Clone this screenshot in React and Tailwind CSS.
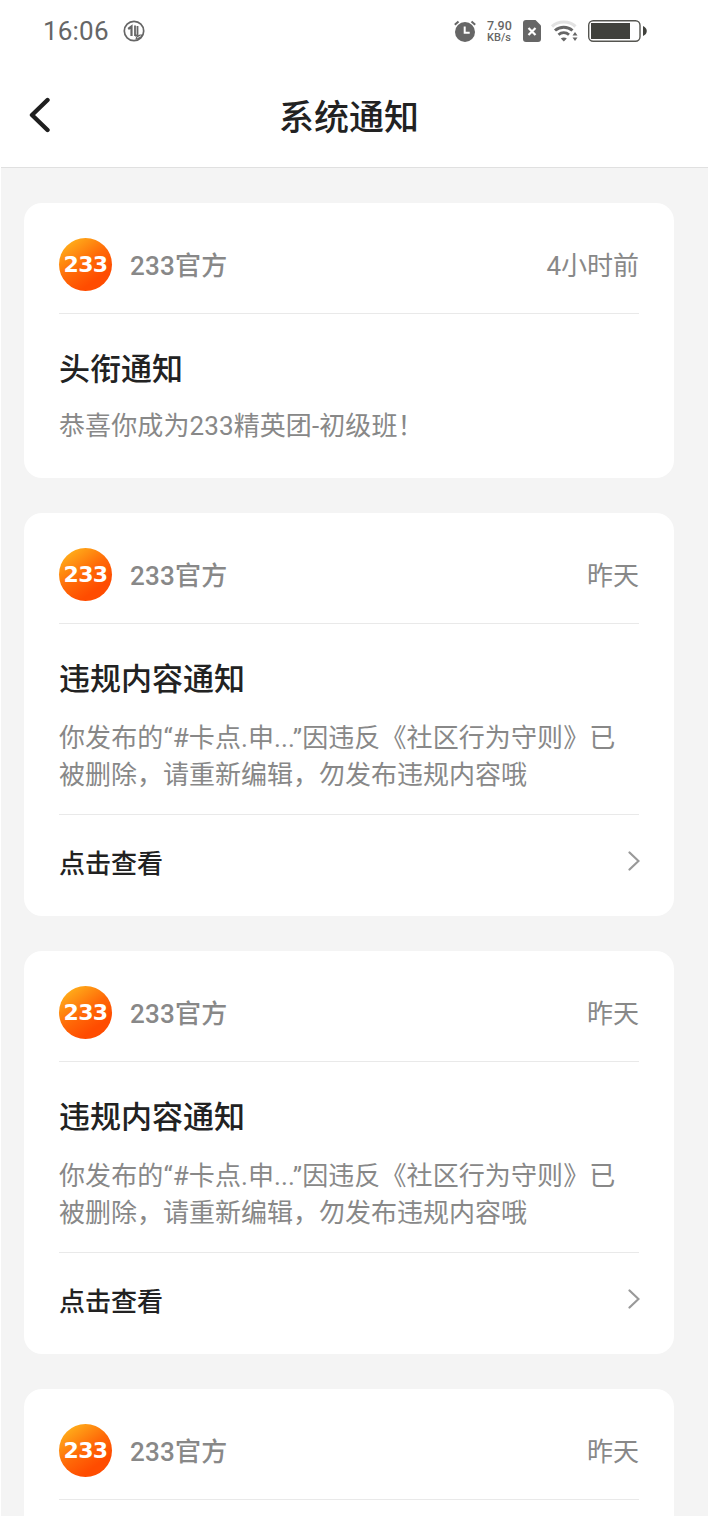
import React from "react";

const messages = [
  {
    id: 1,
    time: "4小时前",
    title: "头衔通知",
    lines: ["恭喜你成为233精英团-初级班！"],
    link: false,
  },
  {
    id: 2,
    time: "昨天",
    title: "违规内容通知",
    lines: ["你发布的“#卡点.申...”因违反《社区行为守则》已", "被删除，请重新编辑，勿发布违规内容哦"],
    link: true,
  },
  {
    id: 3,
    time: "昨天",
    title: "违规内容通知",
    lines: ["你发布的“#卡点.申...”因违反《社区行为守则》已", "被删除，请重新编辑，勿发布违规内容哦"],
    link: true,
  },
  {
    id: 4,
    time: "昨天",
  },
];

function StatusBar() {
  return (
    <div className="flex h-[62px] items-center pl-[43px] pr-[60px] text-[#666]">
      <span className="text-[26px] leading-[30px] tracking-[0.2px]">16:06</span>

      {/* Data saver */}
      <svg className="ml-[14px]" width="22" height="22" viewBox="0 0 22 22" fill="none" stroke="currentColor">
        <circle cx="11" cy="11" r="9.7" strokeWidth="1.7" />
        <path d="M5.2 9 8.500 6.500V16" strokeWidth="2.200" />
        <path d="M12 5.500V16M14.500 6v9l-2.500 1" strokeWidth="1.800" />
        <path d="M12.500 19.500c0-3.500 3-5.500 7.500-5-1 3.500-3.500 5.500-7.500 5Z" fill="currentColor" stroke="none" />
        <path d="m14 18 4-2.300" stroke="white" strokeWidth=".8" />
      </svg>

      <div className="ml-auto flex items-center">
        {/* Alarm */}
        <svg width="22" height="22" viewBox="0 0 22 22" fill="none">
          <circle cx="11" cy="12" r="10" fill="#666" />
          <path d="m.8 4.800 3.700-3.300M21.200 4.800l-3.700-3.300" stroke="#666" strokeWidth="2" />
          <path d="M10.700 6.500v6.300h5" stroke="white" strokeWidth="2" />
        </svg>

        <div className="ml-[11px] w-[26px] text-[11px] font-medium leading-[11px]">
          <div className="text-[12.5px] leading-[12px]">7.90</div>
          <div>KB/s</div>
        </div>

        {/* SIM */}
        <svg className="ml-[10px]" width="18" height="22" viewBox="0 0 18 22">
          <path d="M3 0h9.500L18 5.500V19a3 3 0 0 1-3 3H3a3 3 0 0 1-3-3V3a3 3 0 0 1 3-3Z" fill="#666" />
          <path d="m5.500 8 7 7m0-7-7 7" stroke="white" strokeWidth="2.200" />
        </svg>

        {/* Wifi */}
        <svg className="ml-[10px]" width="27" height="22" viewBox="0 0 27 22" fill="none">
          <path d="M1 6.500c6-6 17.500-6 23.500 0" stroke="#e2e2e2" strokeWidth="3.200" />
          <path d="M4 10.500c5-4.500 12.500-4.500 17.500 0" stroke="#666" strokeWidth="3" />
          <path d="M7.500 14.700c3-2.700 7.500-2.700 10.500 0" stroke="#666" strokeWidth="2.800" />
          <path d="M9.800 18.500c1.500-1.500 4.500-1.500 6 0l-3 3Z" fill="#666" />
          <path d="m21.500 15.500 2.500-3.500 2.500 3.500ZM21.500 17.500l2.500 3.500 2.500-3.500Z" fill="#666" />
        </svg>

        {/* Battery */}
        <svg className="ml-[10px]" width="60" height="22" viewBox="0 0 60 22">
          <rect x=".7" y=".7" width="51.300" height="20.600" rx="4.500" fill="none" stroke="#555550" strokeWidth="1.400" />
          <rect x="3" y="3" width="39" height="16" fill="#40413c" />
          <path d="M55 6c5 2 5 8 0 10Z" fill="#40413c" />
        </svg>
      </div>
    </div>
  );
}

function Header() {
  return (
    <div className="grid h-[105px] grid-cols-[100px_1fr_100px] items-center pr-[10px]">
      <button type="button" className="pl-[28px]">
        <svg width="23" height="36" viewBox="0 0 23 36" fill="none">
          <path d="M19.500 3 4 18l15.500 15" stroke="#1f1f1f" strokeWidth="4.400" strokeLinecap="round" strokeLinejoin="round" />
        </svg>
      </button>
      <h1 className="pt-[9px] text-center text-[35px] font-medium leading-[50px] text-[#222]">系统通知</h1>
    </div>
  );
}

function Logo() {
  return (
    <div className="flex h-[53px] w-[53px] items-center justify-center rounded-full bg-linear-[145deg,#ffb41c_8%,#ff6a08_48%,#ff4c00_75%]">
      <span className="font-['DejaVu_Sans'] text-[22px] font-bold leading-none tracking-[-0.6px] text-white">
        233
      </span>
    </div>
  );
}

function MessageCard({ message }) {
  return (
    <div className="shrink-0 rounded-[18px] bg-white px-[35px]">
      <div className="flex h-[111px] items-center border-b border-[#e9e9e9] pt-[13px] text-[26px] text-[#888]">
        <Logo />
        <span className="ml-[18px] pt-1 font-medium tracking-[0.2px]">233官方</span>
        <span className="ml-auto pt-1">{message.time}</span>
      </div>

      {message.title ? (
        <>
          <h2 className="pt-[33px] text-[31px] font-medium leading-[46px] text-[#222]">{message.title}</h2>

          <div
            className={`whitespace-nowrap text-[26px] leading-[37px] text-[#888] ${
              message.link ? "pt-[17px]" : "pt-[15px]"
            }`}
          >
            {message.lines.map((line) => (
              <p key={line} className="first:tracking-[0.1px]">
                {line}
              </p>
            ))}
          </div>
        </>
      ) : (
        <div className="h-[60px]" />
      )}

      {message.link ? (
        <div className="mt-[20px] flex h-[102px] items-center justify-between border-t border-[#e9e9e9] pb-[2px]">
          <span className="text-[26px] font-medium text-[#222]">点击查看</span>
          <svg className="-mr-px mb-[7px]" width="12" height="20" viewBox="0 0 12 20" fill="none">
            <path d="m1.500 1.500 9 8.500-9 8.500" stroke="#999" strokeWidth="2.200" strokeLinecap="round" />
          </svg>
        </div>
      ) : (
        <div className="h-[33px]" />
      )}
    </div>
  );
}

function App() {
  return (
    <div className="h-[1516px] overflow-hidden bg-white font-[Roboto,'Noto_Sans_CJK_SC',sans-serif]">
      <StatusBar />
      <Header />
      <div className="ml-px flex h-[1349px] flex-col gap-[35px] border-t border-[#e0e0e0] bg-[#f4f4f4] pl-[23px] pr-[34px] pt-[35px]">
        {messages.map((message) => (
          <MessageCard key={message.id} message={message} />
        ))}
      </div>
    </div>
  );
}

export default App;
